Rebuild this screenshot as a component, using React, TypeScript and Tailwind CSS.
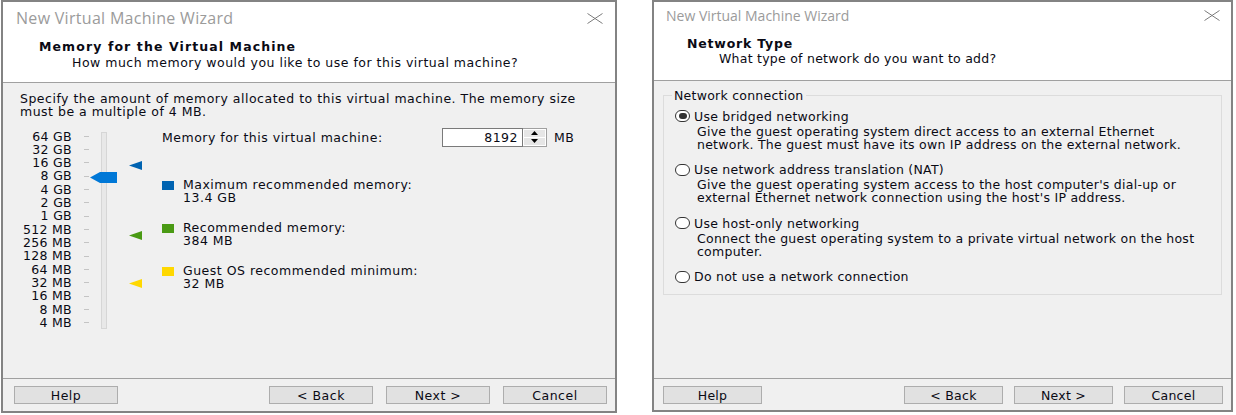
import React from 'react'

const base = "font-['DejaVu_Sans',sans-serif] text-[12.5px] leading-[13px] text-[#0a0a14]"
const titleFont = "font-['Open_Sans','Noto_Sans',sans-serif] text-[#9b9b9b]"

const scale = ['64 GB', '32 GB', '16 GB', '8 GB', '4 GB', '2 GB', '1 GB', '512 MB', '256 MB', '128 MB', '64 MB', '32 MB', '16 MB', '8 MB', '4 MB']

function CloseX() {
  return (
    <svg width="16" height="11" viewBox="0 0 16 11">
      <path d="M0.5 0.5L15.5 10.5M15.5 0.5L0.5 10.5" stroke="#7c7c7c" strokeWidth="1" fill="none" />
    </svg>
  )
}

function Button({ label, w }: { label: string; w: string }) {
  return (
    <div className={`${w} h-[18px] border border-[#adadad] bg-[#e1e1e1] flex items-center justify-center`}>
      {label}
    </div>
  )
}

function Triangle({ color }: { color: string }) {
  return (
    <svg width="13" height="9" viewBox="0 0 13 9">
      <path d="M0 4.5L13 0V9Z" fill={color} />
    </svg>
  )
}

function Legend({ color, label, value }: { color: string; label: string; value: string }) {
  return (
    <div className="flex">
      <div className={`w-[12px] h-[9px] mt-[2.5px] ${color}`} />
      <div className="ml-[9px] flex flex-col">
        <span>{label}</span>
        <span>{value}</span>
      </div>
    </div>
  )
}

function MemoryDialog() {
  return (
    <div className={`ml-[1px] w-[616px] h-[413px] border-2 border-[#838383] bg-[#f0f0f0] flex flex-col ${base} tracking-[0.5px]`}>
      <div className="bg-white h-[80px] flex flex-col">
        <div className="h-[32px] flex items-center justify-between pl-[13px] pr-[12px]">
          <span className={`${titleFont} text-[16px] tracking-[0.3px]`}>New Virtual Machine Wizard</span>
          <CloseX />
        </div>
        <div className="mt-[6px] pl-[36px] font-bold tracking-[1.1px]">Memory for the Virtual Machine</div>
        <div className="mt-[2.5px] pl-[69px]">How much memory would you like to use for this virtual machine?</div>
      </div>
      <div className="h-px bg-[#a0a0a0]" />
      <div className="flex-1 flex flex-col pl-[17px] pt-[8.5px]">
        <p>
          Specify the amount of memory allocated to this virtual machine. The memory size
          <br />
          must be a multiple of 4 MB.
        </p>
        <div className="flex mt-[10px]">
          <div className="relative w-[130px] mt-[2px] flex">
            <div className="w-[52px] flex flex-col text-right tracking-[0.3px]">
              {scale.map((s) => (
                <span key={s} className="h-[13.33px] leading-[13.33px] whitespace-nowrap">{s}</span>
              ))}
            </div>
            <div className="ml-[12px] w-[5px] flex flex-col">
              {scale.map((s) => (
                <div key={s} className="h-[13.33px] flex items-center">
                  <div className="w-[5px] h-px bg-[#c4c4c4]" />
                </div>
              ))}
            </div>
            <div className="ml-[12px] mt-[2.5px] w-[6px] h-[197px] border border-[#d6d6d6] bg-[#e8e8e8]" />
            <svg className="absolute left-[70px] top-[42px]" width="27" height="11" viewBox="0 0 27 11">
              <path d="M0 5.5L10 0H27V11H10Z" fill="#0078d7" />
            </svg>
            <div className="absolute left-[109px] top-[31px]"><Triangle color="#0063b1" /></div>
            <div className="absolute left-[109px] top-[101.5px]"><Triangle color="#4a9a14" /></div>
            <div className="absolute left-[109px] top-[149px]"><Triangle color="#ffd800" /></div>
          </div>
          <div className="ml-[12px] flex flex-col">
            <div className="flex items-center h-[19px]">
              <span className="w-[280px]">Memory for this virtual machine:</span>
              <div className="w-[81px] h-[19px] border border-[#7a7a7a] bg-white flex items-center justify-end pr-[4px]">8192</div>
              <div className="w-[24px] h-[19px] border border-[#a0a0a0] border-l-0 bg-white flex flex-col p-px gap-px">
                <div className="flex-1 bg-[#e6e6e6] flex items-center justify-center">
                  <svg width="7" height="4" viewBox="0 0 7 4"><path d="M0 4L3.5 0L7 4Z" fill="#000" /></svg>
                </div>
                <div className="flex-1 bg-[#e6e6e6] flex items-center justify-center">
                  <svg width="7" height="4" viewBox="0 0 7 4"><path d="M0 0L3.5 4L7 0Z" fill="#000" /></svg>
                </div>
              </div>
              <span className="ml-[7px]">MB</span>
            </div>
            <div className="mt-[31.5px] flex flex-col gap-[17px]">
              <Legend color="bg-[#0063b1]" label="Maximum recommended memory:" value="13.4 GB" />
              <Legend color="bg-[#4a9a14]" label="Recommended memory:" value="384 MB" />
              <Legend color="bg-[#ffd800]" label="Guest OS recommended minimum:" value="32 MB" />
            </div>
          </div>
        </div>
      </div>
      <div className="h-px bg-[#a0a0a0]" />
      <div className="h-[32px] flex items-start pt-[7px] pl-[11px] pr-[8px]">
        <Button label="Help" w="w-[104px]" />
        <div className="flex-1" />
        <div className="flex gap-[13px]">
          <Button label="< Back" w="w-[104px]" />
          <Button label="Next >" w="w-[104px]" />
          <Button label="Cancel" w="w-[104px]" />
        </div>
      </div>
    </div>
  )
}

function Radio({ checked }: { checked?: boolean }) {
  return (
    <div className="w-[15px] h-[12px] rounded-full border border-[#333] bg-white flex items-center justify-center shrink-0">
      {checked && <div className="w-[8px] h-[6px] rounded-full bg-[#333]" />}
    </div>
  )
}

function Option({ checked, label, desc }: { checked?: boolean; label: string; desc?: string[] }) {
  return (
    <div className="flex flex-col">
      <div className="flex items-center gap-[4px]">
        <Radio checked={checked} />
        <span>{label}</span>
      </div>
      {desc && (
        <div className="pl-[22px] mt-[2px] flex flex-col">
          {desc.map((d) => (
            <span key={d}>{d}</span>
          ))}
        </div>
      )}
    </div>
  )
}

function NetworkDialog() {
  return (
    <div className={`ml-[35px] w-[581px] h-[412px] border-2 border-[#838383] bg-[#f0f0f0] flex flex-col ${base} tracking-[0.25px]`}>
      <div className="bg-white h-[78px] flex flex-col">
        <div className="h-[26px] flex items-center justify-between pl-[12px] pr-[11px]">
          <span className={`${titleFont} text-[14px] tracking-normal`}>New Virtual Machine Wizard</span>
          <CloseX />
        </div>
        <div className="mt-[8.5px] pl-[33px] font-bold tracking-[0.8px]">Network Type</div>
        <div className="mt-[2px] pl-[65px]">What type of network do you want to add?</div>
      </div>
      <div className="h-px bg-[#a0a0a0]" />
      <div className="flex-1 flex flex-col px-[9px] pt-[7.5px]">
        <fieldset className="w-[559px] border border-[#dcdcdc] pb-[11px]">
          <legend className="ml-[8px] px-[2px]">Network connection</legend>
          <div className="mt-[8px] pl-[11px] flex flex-col gap-[12.5px]">
            <Option
              checked
              label="Use bridged networking"
              desc={[
                'Give the guest operating system direct access to an external Ethernet',
                'network. The guest must have its own IP address on the external network.',
              ]}
            />
            <Option
              label="Use network address translation (NAT)"
              desc={[
                "Give the guest operating system access to the host computer's dial-up or",
                "external Ethernet network connection using the host's IP address.",
              ]}
            />
            <Option
              label="Use host-only networking"
              desc={[
                'Connect the guest operating system to a private virtual network on the host',
                'computer.',
              ]}
            />
            <Option label="Do not use a network connection" />
          </div>
        </fieldset>
      </div>
      <div className="h-px bg-[#a0a0a0]" />
      <div className="h-[31px] flex items-start pt-[7px] pl-[9px] pr-[8px]">
        <Button label="Help" w="w-[99px]" />
        <div className="flex-1" />
        <div className="flex gap-[11px]">
          <Button label="< Back" w="w-[99px]" />
          <Button label="Next >" w="w-[99px]" />
          <Button label="Cancel" w="w-[99px]" />
        </div>
      </div>
    </div>
  )
}

export default function App() {
  return (
    <div className="w-[1236px] h-[415px] bg-white flex items-start">
      <MemoryDialog />
      <NetworkDialog />
    </div>
  )
}
